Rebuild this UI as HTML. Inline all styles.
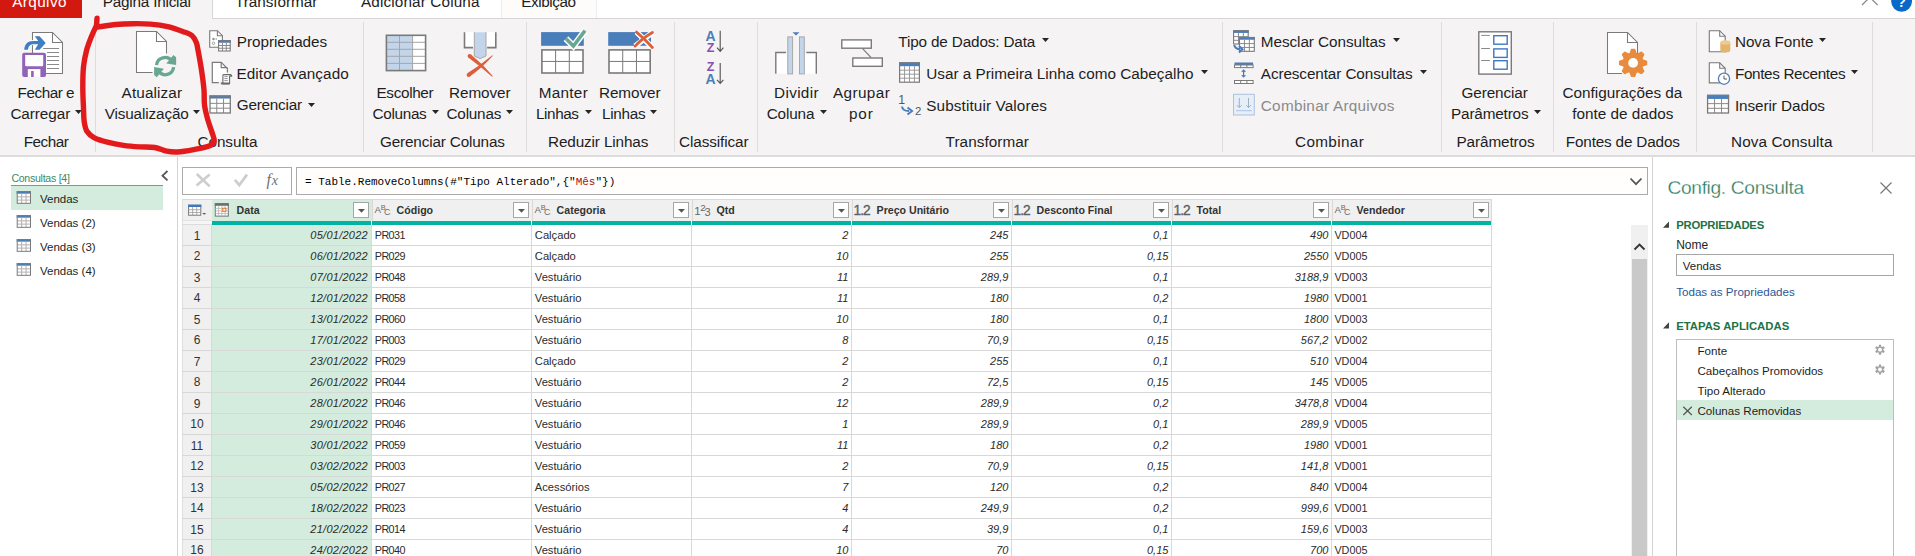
<!DOCTYPE html>
<html><head><meta charset="utf-8"><style>
html,body{margin:0;padding:0;width:1915px;height:556px;overflow:hidden;background:#fff;position:relative;}
.t{position:absolute;font-family:"Liberation Sans", sans-serif;line-height:1;white-space:nowrap;}
.r{position:absolute;}
.s{position:absolute;overflow:visible;}
</style></head><body>
<div class="r" style="left:0px;top:0px;width:1915px;height:18px;background:#ffffff;"></div>
<div class="r" style="left:0px;top:18px;width:1915px;height:138px;background:#f5f3f4;"></div>
<div class="r" style="left:0px;top:155px;width:1915px;height:2px;background:#dcdcdc;"></div>
<div class="r" style="left:212px;top:18px;width:1703px;height:1px;background:#d6d6d6;"></div>
<div class="r" style="left:212px;top:0px;width:1px;height:19px;background:#d6d6d6;"></div>
<div class="r" style="left:0px;top:0px;width:82px;height:18px;background:#d3190f;"></div>
<div class="r" style="left:82px;top:0px;width:130px;height:18px;background:#f5f3f4;"></div>
<div class="r" style="left:502px;top:0px;width:94px;height:18px;background:#fdfcfa;"></div>
<div class="r" style="left:501px;top:0px;width:1px;height:18px;background:#ececec;"></div>
<div class="r" style="left:596px;top:0px;width:1px;height:18px;background:#ececec;"></div>
<div class="t" style="left:12.20px;top:-6.00px;font-size:15.3px;color:#ffffff;letter-spacing:0.405px;">Arquivo</div>
<div class="t" style="left:102.80px;top:-6.00px;font-size:15.3px;color:#1e1e1e;letter-spacing:-0.218px;">Página Inicial</div>
<div class="t" style="left:235.00px;top:-6.00px;font-size:15.3px;color:#1e1e1e;letter-spacing:-0.047px;">Transformar</div>
<div class="t" style="left:361.00px;top:-6.00px;font-size:15.3px;color:#1e1e1e;letter-spacing:0.134px;">Adicionar Coluna</div>
<div class="t" style="left:521.30px;top:-6.00px;font-size:15.3px;color:#1e1e1e;letter-spacing:-0.448px;">Exibição</div>
<div class="r" style="left:95px;top:22px;width:1px;height:130px;background:#dedcdd;"></div>
<div class="r" style="left:363px;top:22px;width:1px;height:130px;background:#dedcdd;"></div>
<div class="r" style="left:526px;top:22px;width:1px;height:130px;background:#dedcdd;"></div>
<div class="r" style="left:674px;top:22px;width:1px;height:130px;background:#dedcdd;"></div>
<div class="r" style="left:757px;top:22px;width:1px;height:130px;background:#dedcdd;"></div>
<div class="r" style="left:1222px;top:22px;width:1px;height:130px;background:#dedcdd;"></div>
<div class="r" style="left:1441px;top:22px;width:1px;height:130px;background:#dedcdd;"></div>
<div class="r" style="left:1553px;top:22px;width:1px;height:130px;background:#dedcdd;"></div>
<div class="r" style="left:1696px;top:22px;width:1px;height:130px;background:#dedcdd;"></div>
<div class="r" style="left:1872px;top:22px;width:1px;height:130px;background:#dedcdd;"></div>
<div class="t" style="left:17.60px;top:85.00px;font-size:15.3px;color:#1e1e1e;letter-spacing:-0.48px;">Fechar e</div>
<div class="t" style="left:10.40px;top:106.00px;font-size:15.3px;color:#1e1e1e;letter-spacing:-0.066px;">Carregar</div>
<svg class="s" style="left:75px;top:110px;" width="8" height="5" viewBox="0 0 8 5"><path d="M0 0H7L3.5 4Z" fill="#262626"/></svg>
<div class="t" style="left:23.70px;top:134.00px;font-size:15.3px;color:#1e1e1e;letter-spacing:-0.497px;">Fechar</div>
<div class="t" style="left:121.60px;top:85.00px;font-size:15.3px;color:#1e1e1e;letter-spacing:0.11px;">Atualizar</div>
<div class="t" style="left:104.70px;top:106.00px;font-size:15.3px;color:#1e1e1e;letter-spacing:-0.137px;">Visualização</div>
<svg class="s" style="left:193px;top:110px;" width="8" height="5" viewBox="0 0 8 5"><path d="M0 0H7L3.5 4Z" fill="#262626"/></svg>
<div class="t" style="left:197.40px;top:134.00px;font-size:15.3px;color:#1e1e1e;letter-spacing:-0.034px;">Consulta</div>
<div class="t" style="left:236.80px;top:34.00px;font-size:15.3px;color:#1e1e1e;letter-spacing:-0.058px;">Propriedades</div>
<div class="t" style="left:236.50px;top:66.00px;font-size:15.3px;color:#1e1e1e;letter-spacing:0.082px;">Editor Avançado</div>
<div class="t" style="left:236.80px;top:97.00px;font-size:15.3px;color:#1e1e1e;letter-spacing:-0.246px;">Gerenciar</div>
<svg class="s" style="left:308px;top:103px;" width="8" height="5" viewBox="0 0 8 5"><path d="M0 0H7L3.5 4Z" fill="#262626"/></svg>
<div class="t" style="left:376.50px;top:85.00px;font-size:15.3px;color:#1e1e1e;letter-spacing:-0.345px;">Escolher</div>
<div class="t" style="left:372.60px;top:106.00px;font-size:15.3px;color:#1e1e1e;letter-spacing:-0.325px;">Colunas</div>
<svg class="s" style="left:432px;top:110px;" width="8" height="5" viewBox="0 0 8 5"><path d="M0 0H7L3.5 4Z" fill="#262626"/></svg>
<div class="t" style="left:449.00px;top:85.00px;font-size:15.3px;color:#1e1e1e;letter-spacing:-0.074px;">Remover</div>
<div class="t" style="left:446.50px;top:106.00px;font-size:15.3px;color:#1e1e1e;letter-spacing:-0.209px;">Colunas</div>
<svg class="s" style="left:506px;top:110px;" width="8" height="5" viewBox="0 0 8 5"><path d="M0 0H7L3.5 4Z" fill="#262626"/></svg>
<div class="t" style="left:380.00px;top:134.00px;font-size:15.3px;color:#1e1e1e;letter-spacing:-0.163px;">Gerenciar Colunas</div>
<div class="t" style="left:538.80px;top:85.00px;font-size:15.3px;color:#1e1e1e;letter-spacing:0.263px;">Manter</div>
<div class="t" style="left:536.00px;top:106.00px;font-size:15.3px;color:#1e1e1e;letter-spacing:-0.412px;">Linhas</div>
<svg class="s" style="left:584.5px;top:110px;" width="8" height="5" viewBox="0 0 8 5"><path d="M0 0H7L3.5 4Z" fill="#262626"/></svg>
<div class="t" style="left:599.00px;top:85.00px;font-size:15.3px;color:#1e1e1e;letter-spacing:-0.09px;">Remover</div>
<div class="t" style="left:602.00px;top:106.00px;font-size:15.3px;color:#1e1e1e;letter-spacing:-0.272px;">Linhas</div>
<svg class="s" style="left:650px;top:110px;" width="8" height="5" viewBox="0 0 8 5"><path d="M0 0H7L3.5 4Z" fill="#262626"/></svg>
<div class="t" style="left:548.00px;top:134.00px;font-size:15.3px;color:#1e1e1e;letter-spacing:-0.127px;">Reduzir Linhas</div>
<div class="t" style="left:679.00px;top:134.00px;font-size:15.3px;color:#1e1e1e;letter-spacing:-0.103px;">Classificar</div>
<div class="t" style="left:774.00px;top:85.00px;font-size:15.3px;color:#1e1e1e;letter-spacing:0.344px;">Dividir</div>
<div class="t" style="left:766.70px;top:106.00px;font-size:15.3px;color:#1e1e1e;letter-spacing:-0.156px;">Coluna</div>
<svg class="s" style="left:820px;top:110px;" width="8" height="5" viewBox="0 0 8 5"><path d="M0 0H7L3.5 4Z" fill="#262626"/></svg>
<div class="t" style="left:833.00px;top:85.00px;font-size:15.3px;color:#1e1e1e;letter-spacing:0.389px;">Agrupar</div>
<div class="t" style="left:849.00px;top:106.00px;font-size:15.3px;color:#1e1e1e;letter-spacing:0.846px;">por</div>
<div class="t" style="left:898.30px;top:34.00px;font-size:15.3px;color:#1e1e1e;letter-spacing:-0.152px;">Tipo de Dados: Data</div>
<svg class="s" style="left:1041.5px;top:38px;" width="8" height="5" viewBox="0 0 8 5"><path d="M0 0H7L3.5 4Z" fill="#262626"/></svg>
<div class="t" style="left:926.20px;top:66.00px;font-size:15.3px;color:#1e1e1e;letter-spacing:0.007px;">Usar a Primeira Linha como Cabeçalho</div>
<svg class="s" style="left:1201px;top:70px;" width="8" height="5" viewBox="0 0 8 5"><path d="M0 0H7L3.5 4Z" fill="#262626"/></svg>
<div class="t" style="left:926.20px;top:98.00px;font-size:15.3px;color:#1e1e1e;letter-spacing:0.117px;">Substituir Valores</div>
<div class="t" style="left:945.60px;top:134.00px;font-size:15.3px;color:#1e1e1e;letter-spacing:0.053px;">Transformar</div>
<div class="t" style="left:1260.80px;top:34.00px;font-size:15.3px;color:#1e1e1e;letter-spacing:-0.065px;">Mesclar Consultas</div>
<svg class="s" style="left:1393px;top:38px;" width="8" height="5" viewBox="0 0 8 5"><path d="M0 0H7L3.5 4Z" fill="#262626"/></svg>
<div class="t" style="left:1260.80px;top:66.00px;font-size:15.3px;color:#1e1e1e;letter-spacing:-0.106px;">Acrescentar Consultas</div>
<svg class="s" style="left:1420px;top:70px;" width="8" height="5" viewBox="0 0 8 5"><path d="M0 0H7L3.5 4Z" fill="#262626"/></svg>
<div class="t" style="left:1260.80px;top:98.00px;font-size:15.3px;color:#8a8a8a;letter-spacing:0.27px;">Combinar Arquivos</div>
<div class="t" style="left:1295.00px;top:134.00px;font-size:15.3px;color:#1e1e1e;letter-spacing:0.353px;">Combinar</div>
<div class="t" style="left:1461.40px;top:85.00px;font-size:15.3px;color:#1e1e1e;letter-spacing:-0.083px;">Gerenciar</div>
<div class="t" style="left:1451.00px;top:106.00px;font-size:15.3px;color:#1e1e1e;letter-spacing:-0.167px;">Parâmetros</div>
<svg class="s" style="left:1533.5px;top:110px;" width="8" height="5" viewBox="0 0 8 5"><path d="M0 0H7L3.5 4Z" fill="#262626"/></svg>
<div class="t" style="left:1456.50px;top:134.00px;font-size:15.3px;color:#1e1e1e;letter-spacing:-0.1px;">Parâmetros</div>
<div class="t" style="left:1562.60px;top:85.00px;font-size:15.3px;color:#1e1e1e;letter-spacing:-0.017px;">Configurações da</div>
<div class="t" style="left:1572.30px;top:106.00px;font-size:15.3px;color:#1e1e1e;letter-spacing:-0.001px;">fonte de dados</div>
<div class="t" style="left:1565.80px;top:134.00px;font-size:15.3px;color:#1e1e1e;letter-spacing:-0.172px;">Fontes de Dados</div>
<div class="t" style="left:1734.90px;top:34.00px;font-size:15.3px;color:#1e1e1e;letter-spacing:-0.056px;">Nova Fonte</div>
<svg class="s" style="left:1819px;top:38px;" width="8" height="5" viewBox="0 0 8 5"><path d="M0 0H7L3.5 4Z" fill="#262626"/></svg>
<div class="t" style="left:1734.90px;top:66.00px;font-size:15.3px;color:#1e1e1e;letter-spacing:-0.355px;">Fontes Recentes</div>
<svg class="s" style="left:1851px;top:70px;" width="8" height="5" viewBox="0 0 8 5"><path d="M0 0H7L3.5 4Z" fill="#262626"/></svg>
<div class="t" style="left:1734.90px;top:98.00px;font-size:15.3px;color:#1e1e1e;letter-spacing:-0.072px;">Inserir Dados</div>
<div class="t" style="left:1731.00px;top:134.00px;font-size:15.3px;color:#1e1e1e;letter-spacing:0.088px;">Nova Consulta</div>
<div class="r" style="left:177px;top:157px;width:1px;height:399px;background:#d4d4d4;"></div>
<div class="r" style="left:1652px;top:157px;width:1px;height:399px;background:#d4d4d4;"></div>
<div class="t" style="left:11.40px;top:173.00px;font-size:10.6px;color:#3c8a66;letter-spacing:-0.279px;">Consultas [4]</div>
<div class="r" style="left:11px;top:185px;width:152px;height:1px;background:#8f8f8f;"></div>
<div class="r" style="left:11px;top:186px;width:152px;height:24px;background:#d3ecdd;"></div>
<div class="t" style="left:40.00px;top:194.00px;font-size:11.5px;color:#1e1e1e;">Vendas</div>
<div class="t" style="left:40.00px;top:218.00px;font-size:11.5px;color:#1e1e1e;">Vendas (2)</div>
<div class="t" style="left:40.00px;top:242.00px;font-size:11.5px;color:#1e1e1e;">Vendas (3)</div>
<div class="t" style="left:40.00px;top:266.00px;font-size:11.5px;color:#1e1e1e;">Vendas (4)</div>
<div class="r" style="left:182px;top:167px;width:110px;height:28px;background:#ffffff;border:1px solid #ababab;box-sizing:border-box;"></div>
<div class="r" style="left:296px;top:167px;width:1352px;height:28px;background:#fffefc;border:1px solid #ababab;box-sizing:border-box;"></div>
<div class="t" style="left:305.00px;top:177.00px;font-size:11px;color:#000;font-family:'Liberation Mono', monospace;">= Table.RemoveColumns(#"Tipo Alterado",{"<span style='color:#a31515'>Mês</span>"})</div>
<div class="r" style="left:182px;top:199px;width:1310px;height:1px;background:#d8d8d8;"></div>
<div class="r" style="left:182px;top:200px;width:30px;height:21px;background:#f0f0f0;"></div>
<div class="r" style="left:212px;top:200px;width:160px;height:21px;background:#d3ecdd;"></div>
<div class="r" style="left:372px;top:200px;width:1120px;height:21px;background:#f0f0f0;"></div>
<div class="r" style="left:1491px;top:199px;width:1px;height:26px;background:#d8d8d8;"></div>
<div class="r" style="left:371.5px;top:200px;width:1px;height:21px;background:#d8d8d8;"></div>
<div class="r" style="left:531.5px;top:200px;width:1px;height:21px;background:#d8d8d8;"></div>
<div class="r" style="left:691.5px;top:200px;width:1px;height:21px;background:#d8d8d8;"></div>
<div class="r" style="left:851.5px;top:200px;width:1px;height:21px;background:#d8d8d8;"></div>
<div class="r" style="left:1011.5px;top:200px;width:1px;height:21px;background:#d8d8d8;"></div>
<div class="r" style="left:1171.5px;top:200px;width:1px;height:21px;background:#d8d8d8;"></div>
<div class="r" style="left:1331.5px;top:200px;width:1px;height:21px;background:#d8d8d8;"></div>
<div class="r" style="left:212px;top:221px;width:159px;height:4px;background:#01b3a1;"></div>
<div class="r" style="left:372px;top:221px;width:159px;height:4px;background:#01b3a1;"></div>
<div class="r" style="left:532px;top:221px;width:159px;height:4px;background:#01b3a1;"></div>
<div class="r" style="left:692px;top:221px;width:159px;height:4px;background:#01b3a1;"></div>
<div class="r" style="left:852px;top:221px;width:159px;height:4px;background:#01b3a1;"></div>
<div class="r" style="left:1012px;top:221px;width:159px;height:4px;background:#01b3a1;"></div>
<div class="r" style="left:1172px;top:221px;width:159px;height:4px;background:#01b3a1;"></div>
<div class="r" style="left:1332px;top:221px;width:159px;height:4px;background:#01b3a1;"></div>
<div class="r" style="left:182px;top:225px;width:30px;height:331px;background:#f0f0f0;"></div>
<div class="r" style="left:182px;top:221px;width:30px;height:4px;background:#f6f6f6;"></div>
<div class="r" style="left:182px;top:224px;width:30px;height:1px;background:#dcdcdc;"></div>
<div class="r" style="left:182px;top:220px;width:30px;height:1px;background:#e2e2e2;"></div>
<div class="r" style="left:182px;top:199px;width:1px;height:357px;background:#dedede;"></div>
<div class="r" style="left:212px;top:225px;width:160px;height:331px;background:#d3ecdd;"></div>
<div class="r" style="left:372px;top:225px;width:1120px;height:331px;background:#ffffff;"></div>
<div class="r" style="left:182px;top:245px;width:1310px;height:1px;background:#d8d8d8;"></div>
<div class="r" style="left:182px;top:266px;width:1310px;height:1px;background:#d8d8d8;"></div>
<div class="r" style="left:182px;top:287px;width:1310px;height:1px;background:#d8d8d8;"></div>
<div class="r" style="left:182px;top:308px;width:1310px;height:1px;background:#d8d8d8;"></div>
<div class="r" style="left:182px;top:329px;width:1310px;height:1px;background:#d8d8d8;"></div>
<div class="r" style="left:182px;top:350px;width:1310px;height:1px;background:#d8d8d8;"></div>
<div class="r" style="left:182px;top:371px;width:1310px;height:1px;background:#d8d8d8;"></div>
<div class="r" style="left:182px;top:392px;width:1310px;height:1px;background:#d8d8d8;"></div>
<div class="r" style="left:182px;top:413px;width:1310px;height:1px;background:#d8d8d8;"></div>
<div class="r" style="left:182px;top:434px;width:1310px;height:1px;background:#d8d8d8;"></div>
<div class="r" style="left:182px;top:455px;width:1310px;height:1px;background:#d8d8d8;"></div>
<div class="r" style="left:182px;top:476px;width:1310px;height:1px;background:#d8d8d8;"></div>
<div class="r" style="left:182px;top:497px;width:1310px;height:1px;background:#d8d8d8;"></div>
<div class="r" style="left:182px;top:518px;width:1310px;height:1px;background:#d8d8d8;"></div>
<div class="r" style="left:182px;top:539px;width:1310px;height:1px;background:#d8d8d8;"></div>
<div class="r" style="left:182px;top:560px;width:1310px;height:1px;background:#d8d8d8;"></div>
<div class="r" style="left:211px;top:225px;width:1px;height:331px;background:#d8d8d8;"></div>
<div class="r" style="left:371px;top:225px;width:1px;height:331px;background:#d8d8d8;"></div>
<div class="r" style="left:531px;top:225px;width:1px;height:331px;background:#d8d8d8;"></div>
<div class="r" style="left:691px;top:225px;width:1px;height:331px;background:#d8d8d8;"></div>
<div class="r" style="left:851px;top:225px;width:1px;height:331px;background:#d8d8d8;"></div>
<div class="r" style="left:1011px;top:225px;width:1px;height:331px;background:#d8d8d8;"></div>
<div class="r" style="left:1171px;top:225px;width:1px;height:331px;background:#d8d8d8;"></div>
<div class="r" style="left:1331px;top:225px;width:1px;height:331px;background:#d8d8d8;"></div>
<div class="r" style="left:1491px;top:225px;width:1px;height:331px;background:#d8d8d8;"></div>
<div class="t" style="left:182.00px;width:30px;text-align:center;top:230.00px;font-size:12px;color:#333;">1</div>
<div class="t" style="left:218.00px;width:150px;text-align:right;top:230.00px;font-size:11px;color:#2b2b2b;font-style:italic;letter-spacing:0.26px;">05/01/2022</div>
<div class="t" style="left:374.80px;top:230.00px;font-size:10.8px;color:#2b2b2b;letter-spacing:-0.6px;">PR031</div>
<div class="t" style="left:534.80px;top:230.00px;font-size:11.2px;color:#2b2b2b;">Calçado</div>
<div class="t" style="left:698.40px;width:150px;text-align:right;top:230.00px;font-size:11px;color:#2b2b2b;font-style:italic;">2</div>
<div class="t" style="left:858.40px;width:150px;text-align:right;top:230.00px;font-size:11px;color:#2b2b2b;font-style:italic;">245</div>
<div class="t" style="left:1018.40px;width:150px;text-align:right;top:230.00px;font-size:11px;color:#2b2b2b;font-style:italic;">0,1</div>
<div class="t" style="left:1178.40px;width:150px;text-align:right;top:230.00px;font-size:11px;color:#2b2b2b;font-style:italic;">490</div>
<div class="t" style="left:1334.40px;top:230.00px;font-size:10.8px;color:#2b2b2b;">VD004</div>
<div class="t" style="left:182.00px;width:30px;text-align:center;top:250.00px;font-size:12px;color:#333;">2</div>
<div class="t" style="left:218.00px;width:150px;text-align:right;top:251.00px;font-size:11px;color:#2b2b2b;font-style:italic;letter-spacing:0.26px;">06/01/2022</div>
<div class="t" style="left:374.80px;top:251.00px;font-size:10.8px;color:#2b2b2b;letter-spacing:-0.6px;">PR029</div>
<div class="t" style="left:534.80px;top:251.00px;font-size:11.2px;color:#2b2b2b;">Calçado</div>
<div class="t" style="left:698.40px;width:150px;text-align:right;top:251.00px;font-size:11px;color:#2b2b2b;font-style:italic;">10</div>
<div class="t" style="left:858.40px;width:150px;text-align:right;top:251.00px;font-size:11px;color:#2b2b2b;font-style:italic;">255</div>
<div class="t" style="left:1018.40px;width:150px;text-align:right;top:251.00px;font-size:11px;color:#2b2b2b;font-style:italic;">0,15</div>
<div class="t" style="left:1178.40px;width:150px;text-align:right;top:251.00px;font-size:11px;color:#2b2b2b;font-style:italic;">2550</div>
<div class="t" style="left:1334.40px;top:251.00px;font-size:10.8px;color:#2b2b2b;">VD005</div>
<div class="t" style="left:182.00px;width:30px;text-align:center;top:272.00px;font-size:12px;color:#333;">3</div>
<div class="t" style="left:218.00px;width:150px;text-align:right;top:272.00px;font-size:11px;color:#2b2b2b;font-style:italic;letter-spacing:0.26px;">07/01/2022</div>
<div class="t" style="left:374.80px;top:272.00px;font-size:10.8px;color:#2b2b2b;letter-spacing:-0.6px;">PR048</div>
<div class="t" style="left:534.80px;top:272.00px;font-size:11.2px;color:#2b2b2b;">Vestuário</div>
<div class="t" style="left:698.40px;width:150px;text-align:right;top:272.00px;font-size:11px;color:#2b2b2b;font-style:italic;">11</div>
<div class="t" style="left:858.40px;width:150px;text-align:right;top:272.00px;font-size:11px;color:#2b2b2b;font-style:italic;">289,9</div>
<div class="t" style="left:1018.40px;width:150px;text-align:right;top:272.00px;font-size:11px;color:#2b2b2b;font-style:italic;">0,1</div>
<div class="t" style="left:1178.40px;width:150px;text-align:right;top:272.00px;font-size:11px;color:#2b2b2b;font-style:italic;">3188,9</div>
<div class="t" style="left:1334.40px;top:272.00px;font-size:10.8px;color:#2b2b2b;">VD003</div>
<div class="t" style="left:182.00px;width:30px;text-align:center;top:292.00px;font-size:12px;color:#333;">4</div>
<div class="t" style="left:218.00px;width:150px;text-align:right;top:293.00px;font-size:11px;color:#2b2b2b;font-style:italic;letter-spacing:0.26px;">12/01/2022</div>
<div class="t" style="left:374.80px;top:293.00px;font-size:10.8px;color:#2b2b2b;letter-spacing:-0.6px;">PR058</div>
<div class="t" style="left:534.80px;top:293.00px;font-size:11.2px;color:#2b2b2b;">Vestuário</div>
<div class="t" style="left:698.40px;width:150px;text-align:right;top:293.00px;font-size:11px;color:#2b2b2b;font-style:italic;">11</div>
<div class="t" style="left:858.40px;width:150px;text-align:right;top:293.00px;font-size:11px;color:#2b2b2b;font-style:italic;">180</div>
<div class="t" style="left:1018.40px;width:150px;text-align:right;top:293.00px;font-size:11px;color:#2b2b2b;font-style:italic;">0,2</div>
<div class="t" style="left:1178.40px;width:150px;text-align:right;top:293.00px;font-size:11px;color:#2b2b2b;font-style:italic;">1980</div>
<div class="t" style="left:1334.40px;top:293.00px;font-size:10.8px;color:#2b2b2b;">VD001</div>
<div class="t" style="left:182.00px;width:30px;text-align:center;top:314.00px;font-size:12px;color:#333;">5</div>
<div class="t" style="left:218.00px;width:150px;text-align:right;top:314.00px;font-size:11px;color:#2b2b2b;font-style:italic;letter-spacing:0.26px;">13/01/2022</div>
<div class="t" style="left:374.80px;top:314.00px;font-size:10.8px;color:#2b2b2b;letter-spacing:-0.6px;">PR060</div>
<div class="t" style="left:534.80px;top:314.00px;font-size:11.2px;color:#2b2b2b;">Vestuário</div>
<div class="t" style="left:698.40px;width:150px;text-align:right;top:314.00px;font-size:11px;color:#2b2b2b;font-style:italic;">10</div>
<div class="t" style="left:858.40px;width:150px;text-align:right;top:314.00px;font-size:11px;color:#2b2b2b;font-style:italic;">180</div>
<div class="t" style="left:1018.40px;width:150px;text-align:right;top:314.00px;font-size:11px;color:#2b2b2b;font-style:italic;">0,1</div>
<div class="t" style="left:1178.40px;width:150px;text-align:right;top:314.00px;font-size:11px;color:#2b2b2b;font-style:italic;">1800</div>
<div class="t" style="left:1334.40px;top:314.00px;font-size:10.8px;color:#2b2b2b;">VD003</div>
<div class="t" style="left:182.00px;width:30px;text-align:center;top:334.00px;font-size:12px;color:#333;">6</div>
<div class="t" style="left:218.00px;width:150px;text-align:right;top:335.00px;font-size:11px;color:#2b2b2b;font-style:italic;letter-spacing:0.26px;">17/01/2022</div>
<div class="t" style="left:374.80px;top:335.00px;font-size:10.8px;color:#2b2b2b;letter-spacing:-0.6px;">PR003</div>
<div class="t" style="left:534.80px;top:335.00px;font-size:11.2px;color:#2b2b2b;">Vestuário</div>
<div class="t" style="left:698.40px;width:150px;text-align:right;top:335.00px;font-size:11px;color:#2b2b2b;font-style:italic;">8</div>
<div class="t" style="left:858.40px;width:150px;text-align:right;top:335.00px;font-size:11px;color:#2b2b2b;font-style:italic;">70,9</div>
<div class="t" style="left:1018.40px;width:150px;text-align:right;top:335.00px;font-size:11px;color:#2b2b2b;font-style:italic;">0,15</div>
<div class="t" style="left:1178.40px;width:150px;text-align:right;top:335.00px;font-size:11px;color:#2b2b2b;font-style:italic;">567,2</div>
<div class="t" style="left:1334.40px;top:335.00px;font-size:10.8px;color:#2b2b2b;">VD002</div>
<div class="t" style="left:182.00px;width:30px;text-align:center;top:356.00px;font-size:12px;color:#333;">7</div>
<div class="t" style="left:218.00px;width:150px;text-align:right;top:356.00px;font-size:11px;color:#2b2b2b;font-style:italic;letter-spacing:0.26px;">23/01/2022</div>
<div class="t" style="left:374.80px;top:356.00px;font-size:10.8px;color:#2b2b2b;letter-spacing:-0.6px;">PR029</div>
<div class="t" style="left:534.80px;top:356.00px;font-size:11.2px;color:#2b2b2b;">Calçado</div>
<div class="t" style="left:698.40px;width:150px;text-align:right;top:356.00px;font-size:11px;color:#2b2b2b;font-style:italic;">2</div>
<div class="t" style="left:858.40px;width:150px;text-align:right;top:356.00px;font-size:11px;color:#2b2b2b;font-style:italic;">255</div>
<div class="t" style="left:1018.40px;width:150px;text-align:right;top:356.00px;font-size:11px;color:#2b2b2b;font-style:italic;">0,1</div>
<div class="t" style="left:1178.40px;width:150px;text-align:right;top:356.00px;font-size:11px;color:#2b2b2b;font-style:italic;">510</div>
<div class="t" style="left:1334.40px;top:356.00px;font-size:10.8px;color:#2b2b2b;">VD004</div>
<div class="t" style="left:182.00px;width:30px;text-align:center;top:376.00px;font-size:12px;color:#333;">8</div>
<div class="t" style="left:218.00px;width:150px;text-align:right;top:377.00px;font-size:11px;color:#2b2b2b;font-style:italic;letter-spacing:0.26px;">26/01/2022</div>
<div class="t" style="left:374.80px;top:377.00px;font-size:10.8px;color:#2b2b2b;letter-spacing:-0.6px;">PR044</div>
<div class="t" style="left:534.80px;top:377.00px;font-size:11.2px;color:#2b2b2b;">Vestuário</div>
<div class="t" style="left:698.40px;width:150px;text-align:right;top:377.00px;font-size:11px;color:#2b2b2b;font-style:italic;">2</div>
<div class="t" style="left:858.40px;width:150px;text-align:right;top:377.00px;font-size:11px;color:#2b2b2b;font-style:italic;">72,5</div>
<div class="t" style="left:1018.40px;width:150px;text-align:right;top:377.00px;font-size:11px;color:#2b2b2b;font-style:italic;">0,15</div>
<div class="t" style="left:1178.40px;width:150px;text-align:right;top:377.00px;font-size:11px;color:#2b2b2b;font-style:italic;">145</div>
<div class="t" style="left:1334.40px;top:377.00px;font-size:10.8px;color:#2b2b2b;">VD005</div>
<div class="t" style="left:182.00px;width:30px;text-align:center;top:398.00px;font-size:12px;color:#333;">9</div>
<div class="t" style="left:218.00px;width:150px;text-align:right;top:398.00px;font-size:11px;color:#2b2b2b;font-style:italic;letter-spacing:0.26px;">28/01/2022</div>
<div class="t" style="left:374.80px;top:398.00px;font-size:10.8px;color:#2b2b2b;letter-spacing:-0.6px;">PR046</div>
<div class="t" style="left:534.80px;top:398.00px;font-size:11.2px;color:#2b2b2b;">Vestuário</div>
<div class="t" style="left:698.40px;width:150px;text-align:right;top:398.00px;font-size:11px;color:#2b2b2b;font-style:italic;">12</div>
<div class="t" style="left:858.40px;width:150px;text-align:right;top:398.00px;font-size:11px;color:#2b2b2b;font-style:italic;">289,9</div>
<div class="t" style="left:1018.40px;width:150px;text-align:right;top:398.00px;font-size:11px;color:#2b2b2b;font-style:italic;">0,2</div>
<div class="t" style="left:1178.40px;width:150px;text-align:right;top:398.00px;font-size:11px;color:#2b2b2b;font-style:italic;">3478,8</div>
<div class="t" style="left:1334.40px;top:398.00px;font-size:10.8px;color:#2b2b2b;">VD004</div>
<div class="t" style="left:182.00px;width:30px;text-align:center;top:418.00px;font-size:12px;color:#333;">10</div>
<div class="t" style="left:218.00px;width:150px;text-align:right;top:419.00px;font-size:11px;color:#2b2b2b;font-style:italic;letter-spacing:0.26px;">29/01/2022</div>
<div class="t" style="left:374.80px;top:419.00px;font-size:10.8px;color:#2b2b2b;letter-spacing:-0.6px;">PR046</div>
<div class="t" style="left:534.80px;top:419.00px;font-size:11.2px;color:#2b2b2b;">Vestuário</div>
<div class="t" style="left:698.40px;width:150px;text-align:right;top:419.00px;font-size:11px;color:#2b2b2b;font-style:italic;">1</div>
<div class="t" style="left:858.40px;width:150px;text-align:right;top:419.00px;font-size:11px;color:#2b2b2b;font-style:italic;">289,9</div>
<div class="t" style="left:1018.40px;width:150px;text-align:right;top:419.00px;font-size:11px;color:#2b2b2b;font-style:italic;">0,1</div>
<div class="t" style="left:1178.40px;width:150px;text-align:right;top:419.00px;font-size:11px;color:#2b2b2b;font-style:italic;">289,9</div>
<div class="t" style="left:1334.40px;top:419.00px;font-size:10.8px;color:#2b2b2b;">VD005</div>
<div class="t" style="left:182.00px;width:30px;text-align:center;top:440.00px;font-size:12px;color:#333;">11</div>
<div class="t" style="left:218.00px;width:150px;text-align:right;top:440.00px;font-size:11px;color:#2b2b2b;font-style:italic;letter-spacing:0.26px;">30/01/2022</div>
<div class="t" style="left:374.80px;top:440.00px;font-size:10.8px;color:#2b2b2b;letter-spacing:-0.6px;">PR059</div>
<div class="t" style="left:534.80px;top:440.00px;font-size:11.2px;color:#2b2b2b;">Vestuário</div>
<div class="t" style="left:698.40px;width:150px;text-align:right;top:440.00px;font-size:11px;color:#2b2b2b;font-style:italic;">11</div>
<div class="t" style="left:858.40px;width:150px;text-align:right;top:440.00px;font-size:11px;color:#2b2b2b;font-style:italic;">180</div>
<div class="t" style="left:1018.40px;width:150px;text-align:right;top:440.00px;font-size:11px;color:#2b2b2b;font-style:italic;">0,2</div>
<div class="t" style="left:1178.40px;width:150px;text-align:right;top:440.00px;font-size:11px;color:#2b2b2b;font-style:italic;">1980</div>
<div class="t" style="left:1334.40px;top:440.00px;font-size:10.8px;color:#2b2b2b;">VD001</div>
<div class="t" style="left:182.00px;width:30px;text-align:center;top:460.00px;font-size:12px;color:#333;">12</div>
<div class="t" style="left:218.00px;width:150px;text-align:right;top:461.00px;font-size:11px;color:#2b2b2b;font-style:italic;letter-spacing:0.26px;">03/02/2022</div>
<div class="t" style="left:374.80px;top:461.00px;font-size:10.8px;color:#2b2b2b;letter-spacing:-0.6px;">PR003</div>
<div class="t" style="left:534.80px;top:461.00px;font-size:11.2px;color:#2b2b2b;">Vestuário</div>
<div class="t" style="left:698.40px;width:150px;text-align:right;top:461.00px;font-size:11px;color:#2b2b2b;font-style:italic;">2</div>
<div class="t" style="left:858.40px;width:150px;text-align:right;top:461.00px;font-size:11px;color:#2b2b2b;font-style:italic;">70,9</div>
<div class="t" style="left:1018.40px;width:150px;text-align:right;top:461.00px;font-size:11px;color:#2b2b2b;font-style:italic;">0,15</div>
<div class="t" style="left:1178.40px;width:150px;text-align:right;top:461.00px;font-size:11px;color:#2b2b2b;font-style:italic;">141,8</div>
<div class="t" style="left:1334.40px;top:461.00px;font-size:10.8px;color:#2b2b2b;">VD001</div>
<div class="t" style="left:182.00px;width:30px;text-align:center;top:482.00px;font-size:12px;color:#333;">13</div>
<div class="t" style="left:218.00px;width:150px;text-align:right;top:482.00px;font-size:11px;color:#2b2b2b;font-style:italic;letter-spacing:0.26px;">05/02/2022</div>
<div class="t" style="left:374.80px;top:482.00px;font-size:10.8px;color:#2b2b2b;letter-spacing:-0.6px;">PR027</div>
<div class="t" style="left:534.80px;top:482.00px;font-size:11.2px;color:#2b2b2b;">Acessórios</div>
<div class="t" style="left:698.40px;width:150px;text-align:right;top:482.00px;font-size:11px;color:#2b2b2b;font-style:italic;">7</div>
<div class="t" style="left:858.40px;width:150px;text-align:right;top:482.00px;font-size:11px;color:#2b2b2b;font-style:italic;">120</div>
<div class="t" style="left:1018.40px;width:150px;text-align:right;top:482.00px;font-size:11px;color:#2b2b2b;font-style:italic;">0,2</div>
<div class="t" style="left:1178.40px;width:150px;text-align:right;top:482.00px;font-size:11px;color:#2b2b2b;font-style:italic;">840</div>
<div class="t" style="left:1334.40px;top:482.00px;font-size:10.8px;color:#2b2b2b;">VD004</div>
<div class="t" style="left:182.00px;width:30px;text-align:center;top:502.00px;font-size:12px;color:#333;">14</div>
<div class="t" style="left:218.00px;width:150px;text-align:right;top:503.00px;font-size:11px;color:#2b2b2b;font-style:italic;letter-spacing:0.26px;">18/02/2022</div>
<div class="t" style="left:374.80px;top:503.00px;font-size:10.8px;color:#2b2b2b;letter-spacing:-0.6px;">PR023</div>
<div class="t" style="left:534.80px;top:503.00px;font-size:11.2px;color:#2b2b2b;">Vestuário</div>
<div class="t" style="left:698.40px;width:150px;text-align:right;top:503.00px;font-size:11px;color:#2b2b2b;font-style:italic;">4</div>
<div class="t" style="left:858.40px;width:150px;text-align:right;top:503.00px;font-size:11px;color:#2b2b2b;font-style:italic;">249,9</div>
<div class="t" style="left:1018.40px;width:150px;text-align:right;top:503.00px;font-size:11px;color:#2b2b2b;font-style:italic;">0,2</div>
<div class="t" style="left:1178.40px;width:150px;text-align:right;top:503.00px;font-size:11px;color:#2b2b2b;font-style:italic;">999,6</div>
<div class="t" style="left:1334.40px;top:503.00px;font-size:10.8px;color:#2b2b2b;">VD001</div>
<div class="t" style="left:182.00px;width:30px;text-align:center;top:524.00px;font-size:12px;color:#333;">15</div>
<div class="t" style="left:218.00px;width:150px;text-align:right;top:524.00px;font-size:11px;color:#2b2b2b;font-style:italic;letter-spacing:0.26px;">21/02/2022</div>
<div class="t" style="left:374.80px;top:524.00px;font-size:10.8px;color:#2b2b2b;letter-spacing:-0.6px;">PR014</div>
<div class="t" style="left:534.80px;top:524.00px;font-size:11.2px;color:#2b2b2b;">Vestuário</div>
<div class="t" style="left:698.40px;width:150px;text-align:right;top:524.00px;font-size:11px;color:#2b2b2b;font-style:italic;">4</div>
<div class="t" style="left:858.40px;width:150px;text-align:right;top:524.00px;font-size:11px;color:#2b2b2b;font-style:italic;">39,9</div>
<div class="t" style="left:1018.40px;width:150px;text-align:right;top:524.00px;font-size:11px;color:#2b2b2b;font-style:italic;">0,1</div>
<div class="t" style="left:1178.40px;width:150px;text-align:right;top:524.00px;font-size:11px;color:#2b2b2b;font-style:italic;">159,6</div>
<div class="t" style="left:1334.40px;top:524.00px;font-size:10.8px;color:#2b2b2b;">VD003</div>
<div class="t" style="left:182.00px;width:30px;text-align:center;top:544.00px;font-size:12px;color:#333;">16</div>
<div class="t" style="left:218.00px;width:150px;text-align:right;top:545.00px;font-size:11px;color:#2b2b2b;font-style:italic;letter-spacing:0.26px;">24/02/2022</div>
<div class="t" style="left:374.80px;top:545.00px;font-size:10.8px;color:#2b2b2b;letter-spacing:-0.6px;">PR040</div>
<div class="t" style="left:534.80px;top:545.00px;font-size:11.2px;color:#2b2b2b;">Vestuário</div>
<div class="t" style="left:698.40px;width:150px;text-align:right;top:545.00px;font-size:11px;color:#2b2b2b;font-style:italic;">10</div>
<div class="t" style="left:858.40px;width:150px;text-align:right;top:545.00px;font-size:11px;color:#2b2b2b;font-style:italic;">70</div>
<div class="t" style="left:1018.40px;width:150px;text-align:right;top:545.00px;font-size:11px;color:#2b2b2b;font-style:italic;">0,15</div>
<div class="t" style="left:1178.40px;width:150px;text-align:right;top:545.00px;font-size:11px;color:#2b2b2b;font-style:italic;">700</div>
<div class="t" style="left:1334.40px;top:545.00px;font-size:10.8px;color:#2b2b2b;">VD005</div>
<div class="t" style="left:236.60px;top:205.00px;font-size:10.6px;color:#333;font-weight:bold;">Data</div>
<div class="r" style="left:353px;top:202px;width:16px;height:16px;background:#ffffff;border:1px solid #a6a6a6;box-sizing:border-box;"></div>
<svg class="s" style="left:357.5px;top:208.5px;" width="8" height="5" viewBox="0 0 8 5"><path d="M0 0H7L3.5 3.8Z" fill="#555"/></svg>
<svg class="s" style="left:212px;top:200px" width="24" height="21"><rect x="3.3" y="3.7" width="13" height="12.4" fill="#fff" stroke="#6f6f6f" stroke-width="1"/><rect x="2.8" y="3.2" width="14" height="2.6" fill="#6f6f6f"/><line x1="6.55" y1="5.8" x2="6.55" y2="16" stroke="#b5b5b5" stroke-width="0.8"/><line x1="9.8" y1="5.8" x2="9.8" y2="16" stroke="#b5b5b5" stroke-width="0.8"/><line x1="13.05" y1="5.8" x2="13.05" y2="16" stroke="#b5b5b5" stroke-width="0.8"/><line x1="3.3" y1="8.375" x2="16.3" y2="8.375" stroke="#b5b5b5" stroke-width="0.8"/><line x1="3.3" y1="10.95" x2="16.3" y2="10.95" stroke="#b5b5b5" stroke-width="0.8"/><line x1="3.3" y1="13.525" x2="16.3" y2="13.525" stroke="#b5b5b5" stroke-width="0.8"/><rect x="10.8" y="8.3" width="3" height="3" fill="#fff" stroke="#e8782a" stroke-width="1.1"/></svg>
<div class="t" style="left:396.60px;top:205.00px;font-size:10.6px;color:#333;font-weight:bold;">Código</div>
<div class="r" style="left:513px;top:202px;width:16px;height:16px;background:#ffffff;border:1px solid #a6a6a6;box-sizing:border-box;"></div>
<svg class="s" style="left:517.5px;top:208.5px;" width="8" height="5" viewBox="0 0 8 5"><path d="M0 0H7L3.5 3.8Z" fill="#555"/></svg>
<svg class="s" style="left:372px;top:200px" width="24" height="21"><text x="2.4" y="13" font-family="Liberation Sans" font-size="9.8" fill="#6a6a6a">A</text><text x="8.7" y="9.7" font-family="Liberation Sans" font-size="7.4" fill="#6a6a6a">B</text><text x="12" y="15.4" font-family="Liberation Sans" font-size="8.8" fill="#6a6a6a">C</text></svg>
<div class="t" style="left:556.60px;top:205.00px;font-size:10.6px;color:#333;font-weight:bold;">Categoria</div>
<div class="r" style="left:673px;top:202px;width:16px;height:16px;background:#ffffff;border:1px solid #a6a6a6;box-sizing:border-box;"></div>
<svg class="s" style="left:677.5px;top:208.5px;" width="8" height="5" viewBox="0 0 8 5"><path d="M0 0H7L3.5 3.8Z" fill="#555"/></svg>
<svg class="s" style="left:532px;top:200px" width="24" height="21"><text x="2.4" y="13" font-family="Liberation Sans" font-size="9.8" fill="#6a6a6a">A</text><text x="8.7" y="9.7" font-family="Liberation Sans" font-size="7.4" fill="#6a6a6a">B</text><text x="12" y="15.4" font-family="Liberation Sans" font-size="8.8" fill="#6a6a6a">C</text></svg>
<div class="t" style="left:716.60px;top:205.00px;font-size:10.6px;color:#333;font-weight:bold;">Qtd</div>
<div class="r" style="left:833px;top:202px;width:16px;height:16px;background:#ffffff;border:1px solid #a6a6a6;box-sizing:border-box;"></div>
<svg class="s" style="left:837.5px;top:208.5px;" width="8" height="5" viewBox="0 0 8 5"><path d="M0 0H7L3.5 3.8Z" fill="#555"/></svg>
<svg class="s" style="left:692px;top:200px" width="24" height="21"><text x="2.2" y="14.8" font-family="Liberation Sans" font-size="11.5" fill="#666">1</text><text x="8.3" y="10.5" font-family="Liberation Sans" font-size="9.8" fill="#666">2</text><text x="12.4" y="16.1" font-family="Liberation Sans" font-size="11" fill="#666">3</text></svg>
<div class="t" style="left:876.60px;top:205.00px;font-size:10.6px;color:#333;font-weight:bold;">Preço Unitário</div>
<div class="r" style="left:993px;top:202px;width:16px;height:16px;background:#ffffff;border:1px solid #a6a6a6;box-sizing:border-box;"></div>
<svg class="s" style="left:997.5px;top:208.5px;" width="8" height="5" viewBox="0 0 8 5"><path d="M0 0H7L3.5 3.8Z" fill="#555"/></svg>
<svg class="s" style="left:852px;top:200px" width="24" height="21"><text x="1.6" y="14.8" font-family="Liberation Sans" font-size="13.8" fill="#5f5f5f" letter-spacing="-1.1" stroke="#5f5f5f" stroke-width="0.35">1.2</text></svg>
<div class="t" style="left:1036.60px;top:205.00px;font-size:10.6px;color:#333;font-weight:bold;">Desconto Final</div>
<div class="r" style="left:1153px;top:202px;width:16px;height:16px;background:#ffffff;border:1px solid #a6a6a6;box-sizing:border-box;"></div>
<svg class="s" style="left:1157.5px;top:208.5px;" width="8" height="5" viewBox="0 0 8 5"><path d="M0 0H7L3.5 3.8Z" fill="#555"/></svg>
<svg class="s" style="left:1012px;top:200px" width="24" height="21"><text x="1.6" y="14.8" font-family="Liberation Sans" font-size="13.8" fill="#5f5f5f" letter-spacing="-1.1" stroke="#5f5f5f" stroke-width="0.35">1.2</text></svg>
<div class="t" style="left:1196.60px;top:205.00px;font-size:10.6px;color:#333;font-weight:bold;">Total</div>
<div class="r" style="left:1313px;top:202px;width:16px;height:16px;background:#ffffff;border:1px solid #a6a6a6;box-sizing:border-box;"></div>
<svg class="s" style="left:1317.5px;top:208.5px;" width="8" height="5" viewBox="0 0 8 5"><path d="M0 0H7L3.5 3.8Z" fill="#555"/></svg>
<svg class="s" style="left:1172px;top:200px" width="24" height="21"><text x="1.6" y="14.8" font-family="Liberation Sans" font-size="13.8" fill="#5f5f5f" letter-spacing="-1.1" stroke="#5f5f5f" stroke-width="0.35">1.2</text></svg>
<div class="t" style="left:1356.60px;top:205.00px;font-size:10.6px;color:#333;font-weight:bold;">Vendedor</div>
<div class="r" style="left:1473px;top:202px;width:16px;height:16px;background:#ffffff;border:1px solid #a6a6a6;box-sizing:border-box;"></div>
<svg class="s" style="left:1477.5px;top:208.5px;" width="8" height="5" viewBox="0 0 8 5"><path d="M0 0H7L3.5 3.8Z" fill="#555"/></svg>
<svg class="s" style="left:1332px;top:200px" width="24" height="21"><text x="2.4" y="13" font-family="Liberation Sans" font-size="9.8" fill="#6a6a6a">A</text><text x="8.7" y="9.7" font-family="Liberation Sans" font-size="7.4" fill="#6a6a6a">B</text><text x="12" y="15.4" font-family="Liberation Sans" font-size="8.8" fill="#6a6a6a">C</text></svg>
<svg class="s" style="left:182px;top:200px" width="30" height="21"><rect x="6.6" y="5.2" width="12.2" height="10" fill="#fff" stroke="#777" stroke-width="1"/><rect x="6.1" y="4.7" width="13.2" height="2.3" fill="#3f78c0"/><line x1="10.666666666666666" y1="7" x2="10.666666666666666" y2="15.2" stroke="#999" stroke-width="0.8"/><line x1="14.733333333333333" y1="7" x2="14.733333333333333" y2="15.2" stroke="#999" stroke-width="0.8"/><line x1="6.6" y1="9.733333333333333" x2="18.8" y2="9.733333333333333" stroke="#999" stroke-width="0.8"/><line x1="6.6" y1="12.466666666666665" x2="18.8" y2="12.466666666666665" stroke="#999" stroke-width="0.8"/><path d="M20.3 12.9H24.1L22.2 14.8Z" fill="#555"/></svg>
<div class="r" style="left:1631px;top:225px;width:17px;height:331px;background:#f0f0f0;"></div>
<div class="r" style="left:1632px;top:259px;width:15px;height:297px;background:#c9c9c9;"></div>
<div class="t" style="left:1667.50px;top:178.00px;font-size:19.2px;color:#24785a;letter-spacing:-0.352px;-webkit-text-stroke:0.3px #ffffff;">Config. Consulta</div>
<div class="t" style="left:1676.20px;top:220.00px;font-size:11.3px;color:#217346;font-weight:bold;letter-spacing:-0.218px;">PROPRIEDADES</div>
<div class="t" style="left:1676.20px;top:239.00px;font-size:12px;color:#1e1e1e;">Nome</div>
<div class="r" style="left:1676px;top:254px;width:218px;height:22px;background:#ffffff;border:1px solid #a6a6a6;box-sizing:border-box;"></div>
<div class="t" style="left:1682.80px;top:261.00px;font-size:11.5px;color:#1e1e1e;">Vendas</div>
<div class="t" style="left:1676.20px;top:286.00px;font-size:11.6px;color:#2b5797;">Todas as Propriedades</div>
<div class="t" style="left:1676.20px;top:321.00px;font-size:11.3px;color:#217346;font-weight:bold;letter-spacing:0.015px;">ETAPAS APLICADAS</div>
<div class="r" style="left:1676px;top:339px;width:218px;height:240px;background:#ffffff;border:1px solid #bdbdbd;box-sizing:border-box;"></div>
<div class="r" style="left:1677px;top:400px;width:216px;height:20px;background:#d3ecdd;"></div>
<div class="t" style="left:1697.50px;top:345.00px;font-size:11.6px;color:#1e1e1e;">Fonte</div>
<div class="t" style="left:1697.50px;top:365.00px;font-size:11.6px;color:#1e1e1e;">Cabeçalhos Promovidos</div>
<div class="t" style="left:1697.50px;top:385.00px;font-size:11.6px;color:#1e1e1e;">Tipo Alterado</div>
<div class="t" style="left:1697.50px;top:405.00px;font-size:11.6px;color:#1e1e1e;">Colunas Removidas</div>
<svg class="s" style="left:0;top:0" width="1915" height="556"><path d="M32.5 32.5H52.5L62.5 42.5V73.5H32.5Z" fill="#fff" stroke="#7a7a7a" stroke-width="1.05"/><path d="M52.5 32.5V42.5H62.5" fill="none" stroke="#7a7a7a" stroke-width="1.05"/><line x1="43.2" y1="48.5" x2="59.1" y2="48.5" stroke="#8a8a8a" stroke-width="1"/><line x1="47" y1="52.5" x2="59.1" y2="52.5" stroke="#8a8a8a" stroke-width="1"/><line x1="47" y1="56.5" x2="59.1" y2="56.5" stroke="#8a8a8a" stroke-width="1"/><line x1="47" y1="60.5" x2="59.1" y2="60.5" stroke="#8a8a8a" stroke-width="1"/><line x1="47" y1="64.5" x2="59.1" y2="64.5" stroke="#8a8a8a" stroke-width="1"/><line x1="47" y1="68.5" x2="59.1" y2="68.5" stroke="#8a8a8a" stroke-width="1"/><rect x="22.2" y="52.8" width="23.8" height="24.2" rx="2" fill="#9063b8"/><path d="M25.2 55.1H43.2V65.3Q43.2 66.3 42.2 66.3H26.2Q25.2 66.3 25.2 65.3Z" fill="#fff"/><rect x="27.8" y="69.1" width="12.6" height="7.9" fill="#fff"/><rect x="31.1" y="71" width="2.6" height="6" fill="#9063b8"/><path d="M24.2 49.7C24.6 44 27.5 40.9 33 40.9H38.2L34.8 36.2H39.6L45.7 42.9L39.6 49.7H34.8L38.2 44.2H33C30 44.2 28.4 46.5 28 49.7Z" fill="#fff" stroke="#fff" stroke-width="1.6" stroke-linejoin="round"/><path d="M24.2 49.7C24.6 44 27.5 40.9 33 40.9H38.2L34.8 36.2H39.6L45.7 42.9L39.6 49.7H34.8L38.2 44.2H33C30 44.2 28.4 46.5 28 49.7Z" fill="#3f7fc0"/><path d="M136.5 31.5H156.5L166.5 41.5V56L158 66L152.7 72.5H136.5Z" fill="#fff"/><path d="M152.5 72.5H136.5V31.5H156.5L166.5 41.5V53.5" fill="none" stroke="#7a7a7a" stroke-width="1.05"/><path d="M156.5 31.5V41.5H166.5" fill="none" stroke="#7a7a7a" stroke-width="1.05"/><g><path d="M156.55 65.10A8.55 8.55 0 0 1 171.84 60.84" fill="none" stroke="#6aa792" stroke-width="3.3"/><path d="M166.3 63.4L173.4 55L176.1 57.3V65.1Z" fill="#6aa792"/></g><g transform="rotate(180 165.1 66.1)"><path d="M156.55 65.10A8.55 8.55 0 0 1 171.84 60.84" fill="none" stroke="#6aa792" stroke-width="3.3"/><path d="M166.3 63.4L173.4 55L176.1 57.3V65.1Z" fill="#6aa792"/></g><path d="M209.7 30.7H217.4L222.4 35.7V47.2H209.7Z" fill="#fff" stroke="#7a7a7a" stroke-width="1.1"/><path d="M217.4 30.7V35.7H222.4" fill="none" stroke="#7a7a7a" stroke-width="1.1"/><circle cx="213.5" cy="39" r="1.2" fill="#8a8a8a"/><circle cx="213.5" cy="43.3" r="1.2" fill="none" stroke="#8a8a8a" stroke-width="0.8"/><line x1="215.5" y1="39" x2="217" y2="39" stroke="#8a8a8a"/><rect x="218.6" y="40.6" width="11.599999999999994" height="10.399999999999999" fill="#fff"/><rect x="218.04999999999998" y="40.050000000000004" width="12.699999999999994" height="2.7" fill="#4a7ebb"/><line x1="222.46666666666667" y1="42.75000000000001" x2="222.46666666666667" y2="51" stroke="#8a8a8a" stroke-width="1"/><line x1="226.33333333333331" y1="42.75000000000001" x2="226.33333333333331" y2="51" stroke="#8a8a8a" stroke-width="1"/><line x1="218.6" y1="45.50000000000001" x2="230.2" y2="45.50000000000001" stroke="#8a8a8a" stroke-width="1"/><line x1="218.6" y1="48.25" x2="230.2" y2="48.25" stroke="#8a8a8a" stroke-width="1"/><rect x="218.6" y="40.6" width="11.599999999999994" height="10.399999999999999" fill="none" stroke="#7a7a7a" stroke-width="1.1"/><path d="M218.8 82.6H212.3V62.3H221.2L227.4 68.5V72.6" fill="#fff" stroke="#7a7a7a" stroke-width="1.2"/><path d="M221.2 62.3V67.7H227.4" fill="none" stroke="#7a7a7a" stroke-width="1.2"/><path d="M222.9 83.6V75.3Q223 74.6 223.8 74.6H230.3Q231.5 74.8 231.8 76.1H229.6V83.6Z" fill="#fff" stroke="#6a6a6a" stroke-width="1.1" stroke-linejoin="round"/><path d="M224.3 76.6H227.8M224.3 78.6H227.8M224.3 80.6H227.8" stroke="#8a8a8a" stroke-width="0.9"/><path d="M220.6 82.6H228.6Q229.6 82.8 229.4 84.4H221.3Z" fill="#6a6a6a"/><rect x="210" y="96" width="20.30000000000001" height="17" fill="#fff"/><rect x="209.35" y="95.35" width="21.600000000000012" height="3.2" fill="#4a7ebb"/><line x1="216.76666666666668" y1="98.55" x2="216.76666666666668" y2="113" stroke="#8a8a8a" stroke-width="1"/><line x1="223.53333333333333" y1="98.55" x2="223.53333333333333" y2="113" stroke="#8a8a8a" stroke-width="1"/><line x1="210" y1="103.36666666666666" x2="230.3" y2="103.36666666666666" stroke="#8a8a8a" stroke-width="1"/><line x1="210" y1="108.18333333333334" x2="230.3" y2="108.18333333333334" stroke="#8a8a8a" stroke-width="1"/><rect x="210" y="96" width="20.30000000000001" height="17" fill="none" stroke="#7a7a7a" stroke-width="1.3"/><rect x="386.4" y="35.3" width="39.2" height="35.3" fill="#fff"/><rect x="386.4" y="35.3" width="26.2" height="35.3" fill="#c2d5ea"/><line x1="399.5" y1="35.3" x2="399.5" y2="70.6" stroke="#a6a6a6" stroke-width="1"/><line x1="412.6" y1="35.3" x2="412.6" y2="70.6" stroke="#a6a6a6" stroke-width="1"/><line x1="386.4" y1="42.3" x2="425.6" y2="42.3" stroke="#a6a6a6" stroke-width="1"/><line x1="386.4" y1="49.3" x2="425.6" y2="49.3" stroke="#a6a6a6" stroke-width="1"/><line x1="386.4" y1="56.3" x2="425.6" y2="56.3" stroke="#a6a6a6" stroke-width="1"/><line x1="386.4" y1="63.4" x2="425.6" y2="63.4" stroke="#a6a6a6" stroke-width="1"/><rect x="386.4" y="35.3" width="39.2" height="35.3" fill="none" stroke="#7a7a7a" stroke-width="1.6"/><rect x="464.5" y="32.2" width="31.3" height="15.4" fill="#fff"/><path d="M464.5 32.2V47.6H473 M487.1 47.6H495.8V32.2" fill="none" stroke="#7a7a7a" stroke-width="1.6"/><path d="M474.3 32.2V56L480.1 58.6L486 56V32.2" fill="#c2d5ea" stroke="#a8a8a8" stroke-width="1"/><path d="M468.27 57.49Q480.67 66.57 492.10 76.74L492.70 76.06Q482.93 64.04 470.93 54.51Z" fill="#dc5f3b"/><circle cx="469.6" cy="56.0" r="2.0" fill="#dc5f3b"/><path d="M469.86 76.46Q482.55 67.61 492.88 55.85L492.32 55.15Q480.41 64.97 467.34 73.34Z" fill="#dc5f3b"/><circle cx="468.6" cy="74.9" r="2.0" fill="#dc5f3b"/><rect x="541.1" y="32.1" width="42.7" height="13.7" fill="#4a7ebb"/><rect x="541.9" y="49.9" width="41.10000000000002" height="23.1" fill="#fff"/><line x1="555.6" y1="49.9" x2="555.6" y2="73" stroke="#7a7a7a" stroke-width="1"/><line x1="569.3" y1="49.9" x2="569.3" y2="73" stroke="#7a7a7a" stroke-width="1"/><line x1="541.9" y1="61.45" x2="583" y2="61.45" stroke="#7a7a7a" stroke-width="1"/><rect x="541.9" y="49.9" width="41.10000000000002" height="23.1" fill="none" stroke="#7a7a7a" stroke-width="1.6"/><path d="M565.9 38.6L573.4 46.1L585 30.7" fill="none" stroke="#fff" stroke-width="6.5" stroke-linejoin="miter"/><path d="M565.9 38.6L573.4 46.1L585 30.7" fill="none" stroke="#6aa792" stroke-width="3.6" stroke-linejoin="miter"/><rect x="608.2" y="32.1" width="42.8" height="13.7" fill="#4a7ebb"/><rect x="609" y="49.9" width="41.200000000000045" height="23.1" fill="#fff"/><line x1="622.7333333333333" y1="49.9" x2="622.7333333333333" y2="73" stroke="#7a7a7a" stroke-width="1"/><line x1="636.4666666666667" y1="49.9" x2="636.4666666666667" y2="73" stroke="#7a7a7a" stroke-width="1"/><line x1="609" y1="61.45" x2="650.2" y2="61.45" stroke="#7a7a7a" stroke-width="1"/><rect x="609" y="49.9" width="41.200000000000045" height="23.1" fill="none" stroke="#7a7a7a" stroke-width="1.6"/><path d="M636.5 32.1L652.4 47.5 M652.4 32.5L635.1 46.1" fill="none" stroke="#fff" stroke-width="5.5"/><path d="M636.5 32.1Q645 39 652.4 47.5 M652.4 32.5Q642 38.5 635.1 46.1" fill="none" stroke="#dc5f3b" stroke-width="2.8" stroke-linecap="round"/><text x="710.5" y="40.8" font-family="Liberation Sans" font-weight="bold" font-size="14" fill="#4a7ebb" text-anchor="middle">A</text><text x="710.5" y="51.7" font-family="Liberation Sans" font-weight="bold" font-size="12.5" fill="#8a4fb0" text-anchor="middle">Z</text><text x="710.5" y="70.6" font-family="Liberation Sans" font-weight="bold" font-size="12.5" fill="#8a4fb0" text-anchor="middle">Z</text><text x="710.5" y="83.5" font-family="Liberation Sans" font-weight="bold" font-size="14" fill="#4a7ebb" text-anchor="middle">A</text><path d="M720.2 30.8V51.3 M717 47.699999999999996L720.2 51.3L723.4 47.699999999999996" fill="none" stroke="#555" stroke-width="1.15"/><path d="M720.2 63V83.5 M717 79.9L720.2 83.5L723.4 79.9" fill="none" stroke="#555" stroke-width="1.15"/><path d="M775.8 73.8V52.5H787.3V73.8Z M804.8 52.5H816.3V73.8H804.8Z" fill="#fff"/><path d="M775.8 73.8V52.5H786 M806.3 52.5H816.3V73.8" fill="none" stroke="#7a7a7a" stroke-width="1.4"/><rect x="787.8" y="36.9" width="4.8" height="37" fill="#c2d5ea" stroke="#a8a8a8" stroke-width="1"/><rect x="799.5" y="36.9" width="4.8" height="37" fill="#c2d5ea" stroke="#a8a8a8" stroke-width="1"/><path d="M792.5 32.2H799.5L796 35.6Z" fill="#4a7ebb"/><rect x="841.8" y="39.9" width="29.5" height="8.3" fill="#fff" stroke="#7a7a7a" stroke-width="1.4"/><rect x="852.8" y="58" width="29.5" height="8.3" fill="#fff" stroke="#7a7a7a" stroke-width="1.4"/><line x1="862.6" y1="48.6" x2="871" y2="57.5" stroke="#7a7a7a" stroke-width="1.1"/><rect x="899.6" y="62.8" width="19.799999999999955" height="19.400000000000006" fill="#fff"/><rect x="899.0" y="62.199999999999996" width="20.999999999999954" height="4" fill="#4a7ebb"/><line x1="904.55" y1="66.19999999999999" x2="904.55" y2="82.2" stroke="#9a9a9a" stroke-width="1"/><line x1="909.5" y1="66.19999999999999" x2="909.5" y2="82.2" stroke="#9a9a9a" stroke-width="1"/><line x1="914.45" y1="66.19999999999999" x2="914.45" y2="82.2" stroke="#9a9a9a" stroke-width="1"/><line x1="899.6" y1="70.19999999999999" x2="919.4" y2="70.19999999999999" stroke="#9a9a9a" stroke-width="1"/><line x1="899.6" y1="74.19999999999999" x2="919.4" y2="74.19999999999999" stroke="#9a9a9a" stroke-width="1"/><line x1="899.6" y1="78.2" x2="919.4" y2="78.2" stroke="#9a9a9a" stroke-width="1"/><rect x="899.6" y="62.8" width="19.799999999999955" height="19.400000000000006" fill="none" stroke="#7a7a7a" stroke-width="1.2"/><text x="901.6" y="104" font-family="Liberation Sans" font-size="12.3" fill="#555" text-anchor="middle">1</text><text x="918.2" y="114.6" font-family="Liberation Sans" font-size="11.4" fill="#555" text-anchor="middle">2</text><path d="M902 106.5Q902.5 111 909 111" fill="none" stroke="#4a7ebb" stroke-width="2"/><path d="M907.5 107.5L912 111L907.5 114.5" fill="none" stroke="#4a7ebb" stroke-width="2"/><rect x="1233.6" y="30.7" width="14.600000000000136" height="13.3" fill="#fff"/><rect x="1233.05" y="30.15" width="15.700000000000136" height="2.8" fill="#4a7ebb"/><line x1="1238.4666666666667" y1="32.949999999999996" x2="1238.4666666666667" y2="44" stroke="#8a8a8a" stroke-width="1"/><line x1="1243.3333333333333" y1="32.949999999999996" x2="1243.3333333333333" y2="44" stroke="#8a8a8a" stroke-width="1"/><line x1="1233.6" y1="36.63333333333333" x2="1248.2" y2="36.63333333333333" stroke="#8a8a8a" stroke-width="1"/><line x1="1233.6" y1="40.31666666666666" x2="1248.2" y2="40.31666666666666" stroke="#8a8a8a" stroke-width="1"/><rect x="1233.6" y="30.7" width="14.600000000000136" height="13.3" fill="none" stroke="#7a7a7a" stroke-width="1.1"/><rect x="1239.5" y="37.5" width="14.799999999999955" height="13.799999999999997" fill="#fff"/><rect x="1238.95" y="36.95" width="15.899999999999954" height="2.8" fill="#4a7ebb"/><line x1="1244.4333333333334" y1="39.75" x2="1244.4333333333334" y2="51.3" stroke="#8a8a8a" stroke-width="1"/><line x1="1249.3666666666666" y1="39.75" x2="1249.3666666666666" y2="51.3" stroke="#8a8a8a" stroke-width="1"/><line x1="1239.5" y1="43.6" x2="1254.3" y2="43.6" stroke="#8a8a8a" stroke-width="1"/><line x1="1239.5" y1="47.449999999999996" x2="1254.3" y2="47.449999999999996" stroke="#8a8a8a" stroke-width="1"/><rect x="1239.5" y="37.5" width="14.799999999999955" height="13.799999999999997" fill="none" stroke="#7a7a7a" stroke-width="1.1"/><path d="M1234.2 45Q1235 49.3 1240.5 49.3" fill="none" stroke="#4a7ebb" stroke-width="2"/><path d="M1239 46L1242.5 49.3L1239 52.6" fill="none" stroke="#4a7ebb" stroke-width="2"/><rect x="1234.5" y="62.5" width="18.6" height="2.6" fill="#4a7ebb"/><rect x="1234.5" y="65" width="18.6" height="2.6" fill="#fff" stroke="#7a7a7a" stroke-width="1"/><line x1="1240.7" y1="65" x2="1240.7" y2="67.6" stroke="#7a7a7a"/><line x1="1246.9" y1="65" x2="1246.9" y2="67.6" stroke="#7a7a7a"/><rect x="1234.5" y="80.5" width="18.6" height="3" fill="#fff" stroke="#7a7a7a" stroke-width="1"/><line x1="1240.7" y1="80.5" x2="1240.7" y2="83.5" stroke="#7a7a7a"/><line x1="1246.9" y1="80.5" x2="1246.9" y2="83.5" stroke="#7a7a7a"/><path d="M1243.6 70V77 M1241.8 71.8L1243.6 70L1245.4 71.8 M1241.8 75.2L1243.6 77L1245.4 75.2" fill="none" stroke="#4a7ebb" stroke-width="1.2"/><rect x="1233.5" y="94.3" width="20.8" height="20.7" fill="#e6eef8" stroke="#a9c3e2" stroke-width="1"/><line x1="1236" y1="110.7" x2="1252" y2="110.7" stroke="#a9c3e2" stroke-width="1"/><path d="M1239.3 98V107.5 M1237 105.2L1239.3 107.5L1241.6 105.2 M1248.5 98V107.5 M1246.2 105.2L1248.5 107.5L1250.8 105.2" fill="none" stroke="#a0aebf" stroke-width="1"/><rect x="1478.8" y="31.8" width="32.5" height="42.3" fill="#fff" stroke="#7a7a7a" stroke-width="1.4"/><line x1="1481.2" y1="35.4" x2="1489.9" y2="35.4" stroke="#8a8a8a" stroke-width="1"/><rect x="1493.8" y="35.7" width="13.4" height="8.5" fill="none" stroke="#3f78c0" stroke-width="1.4"/><line x1="1481.2" y1="48.5" x2="1489.9" y2="48.5" stroke="#8a8a8a" stroke-width="1"/><rect x="1493.8" y="48.9" width="13.4" height="8.5" fill="none" stroke="#3f78c0" stroke-width="1.4"/><line x1="1481.2" y1="60.5" x2="1489.9" y2="60.5" stroke="#8a8a8a" stroke-width="1"/><rect x="1493.8" y="60.7" width="13.4" height="8.5" fill="none" stroke="#3f78c0" stroke-width="1.4"/><path d="M1622 73.5H1607.5V32.5H1627.5L1637.5 42.5V55" fill="#fff" stroke="#7a7a7a" stroke-width="1.05"/><path d="M1627.5 32.5V42.5H1637.5" fill="none" stroke="#7a7a7a" stroke-width="1.05"/><path d="M1630.14 53.35L1631.47 49.40L1634.73 49.40L1636.06 53.35L1637.77 54.06L1641.50 52.20L1643.80 54.50L1641.94 58.23L1642.65 59.94L1646.60 61.27L1646.60 64.53L1642.65 65.86L1641.94 67.57L1643.80 71.30L1641.50 73.60L1637.77 71.74L1636.06 72.45L1634.73 76.40L1631.47 76.40L1630.14 72.45L1628.43 71.74L1624.70 73.60L1622.40 71.30L1624.26 67.57L1623.55 65.86L1619.60 64.53L1619.60 61.27L1623.55 59.94L1624.26 58.23L1622.40 54.50L1624.70 52.20L1628.43 54.06Z" fill="#e88b3d" stroke="#e88b3d" stroke-width="1.3" stroke-linejoin="round"/><circle cx="1633.1" cy="62.9" r="4.9" fill="#fff"/><path d="M1709.3 30.7H1719.7L1725.2 36.2V51.7H1709.3Z" fill="#fff" stroke="#7a7a7a" stroke-width="1.1"/><path d="M1719.7 30.7V36.2H1725.2" fill="none" stroke="#7a7a7a" stroke-width="1.1"/><path d="M1720.3 42.5V50.2A5 2.2 0 0 0 1730.3 50.2V42.5Z" fill="#e2b46c"/><ellipse cx="1725.3" cy="42.5" rx="5" ry="2.2" fill="#eccb92"/><path d="M1709.3 62.8H1719.7L1725.2 68.3V82.9H1709.3Z" fill="#fff" stroke="#7a7a7a" stroke-width="1.1"/><path d="M1719.7 62.8V68.3H1725.2" fill="none" stroke="#7a7a7a" stroke-width="1.1"/><circle cx="1724" cy="78.7" r="5.6" fill="#fff" stroke="#4a7ebb" stroke-width="1.3"/><path d="M1724 75.5V79H1727" fill="none" stroke="#555" stroke-width="1"/><rect x="1707.6" y="95.4" width="20.90000000000009" height="17.599999999999994" fill="#fff"/><rect x="1706.9499999999998" y="94.75" width="22.20000000000009" height="4.2" fill="#4a7ebb"/><line x1="1714.5666666666666" y1="98.95" x2="1714.5666666666666" y2="113" stroke="#8a8a8a" stroke-width="1"/><line x1="1721.5333333333333" y1="98.95" x2="1721.5333333333333" y2="113" stroke="#8a8a8a" stroke-width="1"/><line x1="1707.6" y1="103.63333333333334" x2="1728.5" y2="103.63333333333334" stroke="#8a8a8a" stroke-width="1"/><line x1="1707.6" y1="108.31666666666666" x2="1728.5" y2="108.31666666666666" stroke="#8a8a8a" stroke-width="1"/><rect x="1707.6" y="95.4" width="20.90000000000009" height="17.599999999999994" fill="none" stroke="#7a7a7a" stroke-width="1.3"/><rect x="17.2" y="191.6" width="13.3" height="11.700000000000017" fill="#fff"/><rect x="16.7" y="191.1" width="14.3" height="2.6" fill="#4a7ebb"/><line x1="21.633333333333333" y1="193.7" x2="21.633333333333333" y2="203.3" stroke="#b0b0b0" stroke-width="1"/><line x1="26.066666666666666" y1="193.7" x2="26.066666666666666" y2="203.3" stroke="#b0b0b0" stroke-width="1"/><line x1="17.2" y1="196.9" x2="30.5" y2="196.9" stroke="#b0b0b0" stroke-width="1"/><line x1="17.2" y1="200.1" x2="30.5" y2="200.1" stroke="#b0b0b0" stroke-width="1"/><rect x="17.2" y="191.6" width="13.3" height="11.700000000000017" fill="none" stroke="#7a7a7a" stroke-width="1"/><rect x="17.2" y="215.6" width="13.3" height="11.700000000000017" fill="#fff"/><rect x="16.7" y="215.1" width="14.3" height="2.6" fill="#4a7ebb"/><line x1="21.633333333333333" y1="217.7" x2="21.633333333333333" y2="227.3" stroke="#b0b0b0" stroke-width="1"/><line x1="26.066666666666666" y1="217.7" x2="26.066666666666666" y2="227.3" stroke="#b0b0b0" stroke-width="1"/><line x1="17.2" y1="220.9" x2="30.5" y2="220.9" stroke="#b0b0b0" stroke-width="1"/><line x1="17.2" y1="224.1" x2="30.5" y2="224.1" stroke="#b0b0b0" stroke-width="1"/><rect x="17.2" y="215.6" width="13.3" height="11.700000000000017" fill="none" stroke="#7a7a7a" stroke-width="1"/><rect x="17.2" y="239.6" width="13.3" height="11.700000000000017" fill="#fff"/><rect x="16.7" y="239.1" width="14.3" height="2.6" fill="#4a7ebb"/><line x1="21.633333333333333" y1="241.7" x2="21.633333333333333" y2="251.3" stroke="#b0b0b0" stroke-width="1"/><line x1="26.066666666666666" y1="241.7" x2="26.066666666666666" y2="251.3" stroke="#b0b0b0" stroke-width="1"/><line x1="17.2" y1="244.9" x2="30.5" y2="244.9" stroke="#b0b0b0" stroke-width="1"/><line x1="17.2" y1="248.1" x2="30.5" y2="248.1" stroke="#b0b0b0" stroke-width="1"/><rect x="17.2" y="239.6" width="13.3" height="11.700000000000017" fill="none" stroke="#7a7a7a" stroke-width="1"/><rect x="17.2" y="263.6" width="13.3" height="11.699999999999989" fill="#fff"/><rect x="16.7" y="263.1" width="14.3" height="2.6" fill="#4a7ebb"/><line x1="21.633333333333333" y1="265.70000000000005" x2="21.633333333333333" y2="275.3" stroke="#b0b0b0" stroke-width="1"/><line x1="26.066666666666666" y1="265.70000000000005" x2="26.066666666666666" y2="275.3" stroke="#b0b0b0" stroke-width="1"/><line x1="17.2" y1="268.90000000000003" x2="30.5" y2="268.90000000000003" stroke="#b0b0b0" stroke-width="1"/><line x1="17.2" y1="272.1" x2="30.5" y2="272.1" stroke="#b0b0b0" stroke-width="1"/><rect x="17.2" y="263.6" width="13.3" height="11.699999999999989" fill="none" stroke="#7a7a7a" stroke-width="1"/><path d="M196.8 174L209.7 186.4 M209.7 174.6L196.5 185.5" fill="none" stroke="#cdcdcd" stroke-width="2.6"/><path d="M234.9 179.8L239.3 185L247 174.6" fill="none" stroke="#cdcdcd" stroke-width="2.7"/><text x="266.5" y="185" font-family="Liberation Serif" font-style="italic" font-size="16" fill="#707070">f</text><text x="271.8" y="184.5" font-family="Liberation Serif" font-style="italic" font-size="14" fill="#707070">x</text><path d="M1630.5 178.5L1636 184.2L1641.5 178.5" fill="none" stroke="#555" stroke-width="1.8"/><path d="M1634.5 249.5L1639.5 244.5L1644.5 249.5" fill="none" stroke="#333" stroke-width="1.8"/><path d="M167.5 171L162.5 175.7L167.5 180.4" fill="none" stroke="#555" stroke-width="1.8"/><path d="M1880.5 182.5L1891.5 193.5 M1891.5 182.5L1880.5 193.5" fill="none" stroke="#777" stroke-width="1.2"/><path d="M1669 221.5V227.7H1663Z" fill="#444"/><path d="M1669 322.3V328.5H1663Z" fill="#444"/><path d="M1878.65 346.69L1878.99 344.70L1881.01 344.70L1881.35 346.69L1881.94 347.03L1883.82 346.32L1884.84 348.08L1883.28 349.36L1883.28 350.04L1884.84 351.32L1883.82 353.08L1881.94 352.37L1881.35 352.71L1881.01 354.70L1878.99 354.70L1878.65 352.71L1878.06 352.37L1876.18 353.08L1875.16 351.32L1876.72 350.04L1876.72 349.36L1875.16 348.08L1876.18 346.32L1878.06 347.03Z" fill="#a3a3a3"/><circle cx="1880" cy="349.7" r="1.9" fill="#fff"/><path d="M1878.65 366.49L1878.99 364.50L1881.01 364.50L1881.35 366.49L1881.94 366.83L1883.82 366.12L1884.84 367.88L1883.28 369.16L1883.28 369.84L1884.84 371.12L1883.82 372.88L1881.94 372.17L1881.35 372.51L1881.01 374.50L1878.99 374.50L1878.65 372.51L1878.06 372.17L1876.18 372.88L1875.16 371.12L1876.72 369.84L1876.72 369.16L1875.16 367.88L1876.18 366.12L1878.06 366.83Z" fill="#a3a3a3"/><circle cx="1880" cy="369.5" r="1.9" fill="#fff"/><path d="M1683.3 406.8L1691.8 415 M1691.8 406.8L1683.3 415" fill="none" stroke="#555" stroke-width="1.2"/><path d="M1862 -10.5L1877.6 5 M1877.6 -10.5L1862 5" fill="none" stroke="#8a8a8a" stroke-width="1.3"/><circle cx="1901.6" cy="1.3" r="10.4" fill="#0a68c8"/><text x="1901.5" y="7" font-family="Liberation Sans" font-weight="bold" font-size="14" fill="#fff" text-anchor="middle">?</text></svg>
<svg class="s" style="left:0;top:0" width="1915" height="556"><path d="M97.8 27.1 C100.82 26.67 110.00 25.07 115.90 24.50 C121.80 23.93 127.45 23.77 133.20 23.70 C138.95 23.63 144.65 23.60 150.40 24.10 C156.15 24.60 161.93 25.33 167.70 26.70 C173.47 28.07 180.97 30.83 185.00 32.30 C189.03 33.77 190.03 33.85 191.90 35.50 C193.77 37.15 195.18 39.78 196.20 42.20 C197.22 44.62 197.12 45.37 198.00 50.00 C198.88 54.63 200.50 63.33 201.50 70.00 C202.50 76.67 203.50 84.17 204.00 90.00 C204.50 95.83 203.88 100.10 204.50 105.00 C205.12 109.90 206.45 114.83 207.70 119.40 C208.95 123.97 210.92 128.80 212.00 132.40 C213.08 136.00 214.57 138.77 214.20 141.00 C213.83 143.23 213.22 144.37 209.80 145.80 C206.38 147.23 199.08 148.57 193.70 149.60 C188.32 150.63 182.00 151.73 177.50 152.00 C173.00 152.27 170.48 151.95 166.70 151.20 C162.92 150.45 159.30 148.22 154.80 147.50 C150.30 146.78 144.92 147.27 139.70 146.90 C134.48 146.53 128.88 146.10 123.50 145.30 C118.12 144.50 112.25 143.35 107.40 142.10 C102.55 140.85 97.82 139.60 94.40 137.80 C90.98 136.00 88.60 134.00 86.90 131.30 C85.20 128.60 84.77 125.43 84.20 121.60 C83.63 117.77 83.73 113.98 83.50 108.30 C83.27 102.62 82.80 94.42 82.80 87.50 C82.80 80.58 82.87 73.02 83.50 66.80 C84.13 60.58 85.22 55.38 86.60 50.20 C87.98 45.02 90.15 39.83 91.80 35.70 C93.45 31.57 95.72 27.12 96.50 25.40 M97 18.2 L96.4 27" fill="none" stroke="#e31a1c" stroke-width="5.4" stroke-linecap="round" stroke-linejoin="round"/></svg>
</body></html>
